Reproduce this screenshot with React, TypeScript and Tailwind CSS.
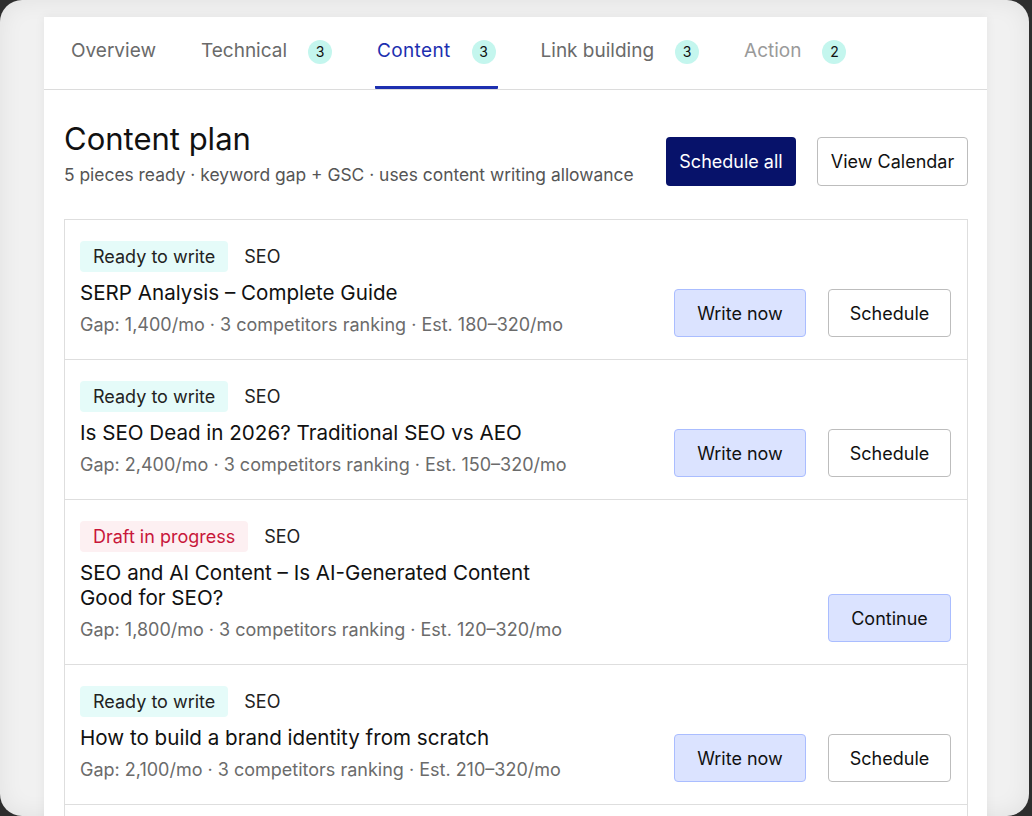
import React from "react";

const TABS = [
  { label: "Overview", count: null as number | null, state: "idle" },
  { label: "Technical", count: 3, state: "idle" },
  { label: "Content", count: 3, state: "active" },
  { label: "Link building", count: 3, state: "idle" },
  { label: "Action", count: 2, state: "muted" },
];

type Item = {
  status: "ready" | "draft";
  title: string;
  meta: string;
};

const ITEMS: Item[] = [
  { status: "ready", title: "SERP Analysis – Complete Guide", meta: "Gap: 1,400/mo · 3 competitors ranking · Est. 180–320/mo" },
  { status: "ready", title: "Is SEO Dead in 2026? Traditional SEO vs AEO", meta: "Gap: 2,400/mo · 3 competitors ranking · Est. 150–320/mo" },
  { status: "draft", title: "SEO and AI Content – Is AI-Generated Content Good for SEO?", meta: "Gap: 1,800/mo · 3 competitors ranking · Est. 120–320/mo" },
  { status: "ready", title: "How to build a brand identity from scratch", meta: "Gap: 2,100/mo · 3 competitors ranking · Est. 210–320/mo" },
  { status: "ready", title: "Keyword research for beginners", meta: "Gap: 1,200/mo · 3 competitors ranking · Est. 140–320/mo" },
];

function ContentRow({ item }: { item: Item }) {
  const ready = item.status === "ready";
  return (
    <div className="flex items-end justify-between border-t border-[#dedede] first:border-t-0 pl-[15px] pr-[16px] pt-[21px] pb-[22px]">
      <div className="max-w-[500px]">
        <div className="flex items-center gap-[16px]">
          {ready ? (
            <span className="h-[31px] px-[13px] flex items-center rounded-[4px] bg-[#e5fbf9] text-[18px] text-[#222]">Ready to write</span>
          ) : (
            <span className="h-[31px] px-[13px] flex items-center rounded-[4px] bg-[#fdf0f2] text-[18px] text-[#c8173a]">Draft in progress</span>
          )}
          <span className="text-[18px] leading-[24px] text-[#222]">SEO</span>
        </div>
        <div className="mt-[8px] text-[20.6px] leading-[25px] text-[#111]">{item.title}</div>
        <div className="mt-[8px] text-[18px] leading-[24px] text-[#6b6b6b]">{item.meta}</div>
      </div>
      <div className="flex items-center gap-[22px]">
        {ready ? (
          <>
            <button className="h-[48px] w-[132px] rounded-[4px] border border-[#aabdff] bg-[#dbe3ff] text-[18px] text-[#111]">Write now</button>
            <button className="h-[48px] w-[123px] rounded-[4px] border border-[#bdbdbd] bg-white text-[18px] text-[#111]">Schedule</button>
          </>
        ) : (
          <button className="h-[48px] w-[123px] rounded-[4px] border border-[#aabdff] bg-[#dbe3ff] text-[18px] text-[#111]">Continue</button>
        )}
      </div>
    </div>
  );
}

export default function App() {
  return (
    <div className="w-[1032px] h-[816px] bg-[#2e2e2e] overflow-hidden" style={{ fontFamily: "Inter, 'Noto Sans', sans-serif" }}>
      <div className="w-[1029px] h-full rounded-[22px] bg-[#f1f1f1] shadow-[inset_0_0_24px_rgba(0,0,0,0.07)] pl-[44px] pt-[17px] overflow-hidden">
        <div className="w-[943px] min-h-[820px] bg-white shadow-[0_0_10px_rgba(0,0,0,0.06)]">
          {/* Tabs */}
          <div className="h-[73px] flex items-stretch pl-[25px] border-b border-[#dcdcdc]">
            {TABS.map((t, i) => (
              <div
                key={t.label}
                className={
                  "flex items-center gap-[21px] px-[2px] border-b-[3px] rounded-b-[1px] " +
                  (i === 0 ? "" : "ml-[41px] ") +
                  (t.state === "active" ? "border-[#1d30b0]" : "border-transparent")
                }
              >
                <span
                  className={
                    "text-[19px] " +
                    (t.state === "active" ? "text-[#1d30b0] tracking-[0.35px]" : t.state === "muted" ? "text-[#9a9a9a]" : "text-[#6a6a6a]")
                  }
                >
                  {t.label}
                </span>
                {t.count !== null && (
                  <span className="w-[24px] h-[24px] rounded-full bg-[#c4f6ee] flex items-center justify-center text-[14px] text-[#111]">
                    {t.count}
                  </span>
                )}
              </div>
            ))}
          </div>

          {/* Header */}
          <div className="flex items-center justify-between pl-[20px] pr-[19px] pt-[30px] pb-[33px]">
            <div>
              <h1 className="text-[31px] leading-[38px] text-[#111]">Content plan</h1>
              <p className="mt-[6px] text-[17.4px] leading-[22px] text-[#555]">5 pieces ready · keyword gap + GSC · uses content writing allowance</p>
            </div>
            <div className="flex items-center gap-[21px] mt-[16px]">
              <button className="h-[49px] px-[13px] w-[130px] rounded-[4px] bg-[#07126a] text-white text-[18px]">Schedule all</button>
              <button className="h-[49px] w-[151px] rounded-[4px] border border-[#bdbdbd] bg-white text-[18px] text-[#111]">View Calendar</button>
            </div>
          </div>

          {/* List */}
          <div className="ml-[20px] mr-[19px] border border-[#dedede]">
            {ITEMS.map((it, i) => (
              <ContentRow key={i} item={it} />
            ))}
          </div>
        </div>
      </div>
    </div>
  );
}
